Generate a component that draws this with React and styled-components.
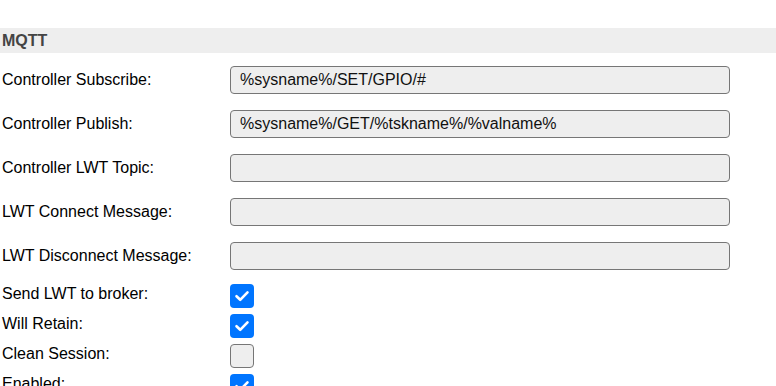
import React from 'react'
import styled, { createGlobalStyle } from 'styled-components'

const GlobalStyle = createGlobalStyle`
  body {
    margin: 0;
    background: #fff;
    font-family: 'Liberation Sans', Arial, sans-serif;
    font-size: 16px;
    color: #000;
  }
`

const Page = styled.div`
  padding-top: 28px;
  width: 776px;
  height: 386px;
  overflow: hidden;
`

const SectionHeader = styled.div`
  height: 25px;
  line-height: 25px;
  padding-left: 2px;
  background-color: #eee;
  color: #444;
  font-weight: bold;
  margin-bottom: 5px;
`

const Row = styled.div`
  display: grid;
  grid-template-columns: 230px 500px;
  align-items: center;
  height: ${({ $tall }) => ($tall ? '44px' : '30px')};
`

const Label = styled.div`
  padding-left: 2px;
  padding-bottom: ${({ $raised }) => ($raised ? '5px' : '0')};
`

const TextInput = styled.input`
  box-sizing: border-box;
  width: 500px;
  height: 28px;
  margin: 0;
  padding: 0 9px;
  border: 1px solid #767676;
  border-radius: 4px;
  background-color: #eee;
  font-family: 'Liberation Sans', Arial, sans-serif;
  font-size: 16px;
  color: #111;
  outline: none;
`

const CheckGroup = styled.div`
  margin-top: 3px;
`

const Box = styled.span`
  box-sizing: border-box;
  display: flex;
  align-items: center;
  justify-content: center;
  width: 24px;
  height: 24px;
  border-radius: 4px;
  background-color: ${({ $on }) => ($on ? '#0075ff' : '#eee')};
  border: ${({ $on }) => ($on ? 'none' : '1px solid #767676')};
`

const fields = [
  ['Controller Subscribe:', '%sysname%/SET/GPIO/#'],
  ['Controller Publish:', '%sysname%/GET/%tskname%/%valname%'],
  ['Controller LWT Topic:', ''],
  ['LWT Connect Message:', ''],
  ['LWT Disconnect Message:', ''],
]

const checks = [
  ['Send LWT to broker:', true],
  ['Will Retain:', true],
  ['Clean Session:', false],
  ['Enabled:', true],
]

function Checkbox({ on }) {
  return (
    <Box $on={on}>
      {on && (
        <svg width="16" height="16" viewBox="0 0 16 16">
          <path d="M2.5 8.2 L6.2 11.8 L13.5 4.4" fill="none" stroke="#fff" strokeWidth="2.6" strokeLinecap="round" strokeLinejoin="round" />
        </svg>
      )}
    </Box>
  )
}

export default function App() {
  return (
    <>
      <GlobalStyle />
      <Page>
        <SectionHeader>MQTT</SectionHeader>
        {fields.map(([label, value]) => (
          <Row $tall key={label}>
            <Label>{label}</Label>
            <TextInput defaultValue={value} />
          </Row>
        ))}
        <CheckGroup>
          {checks.map(([label, on]) => (
            <Row key={label}>
              <Label $raised>{label}</Label>
              <Checkbox on={on} />
            </Row>
          ))}
        </CheckGroup>
      </Page>
    </>
  )
}
